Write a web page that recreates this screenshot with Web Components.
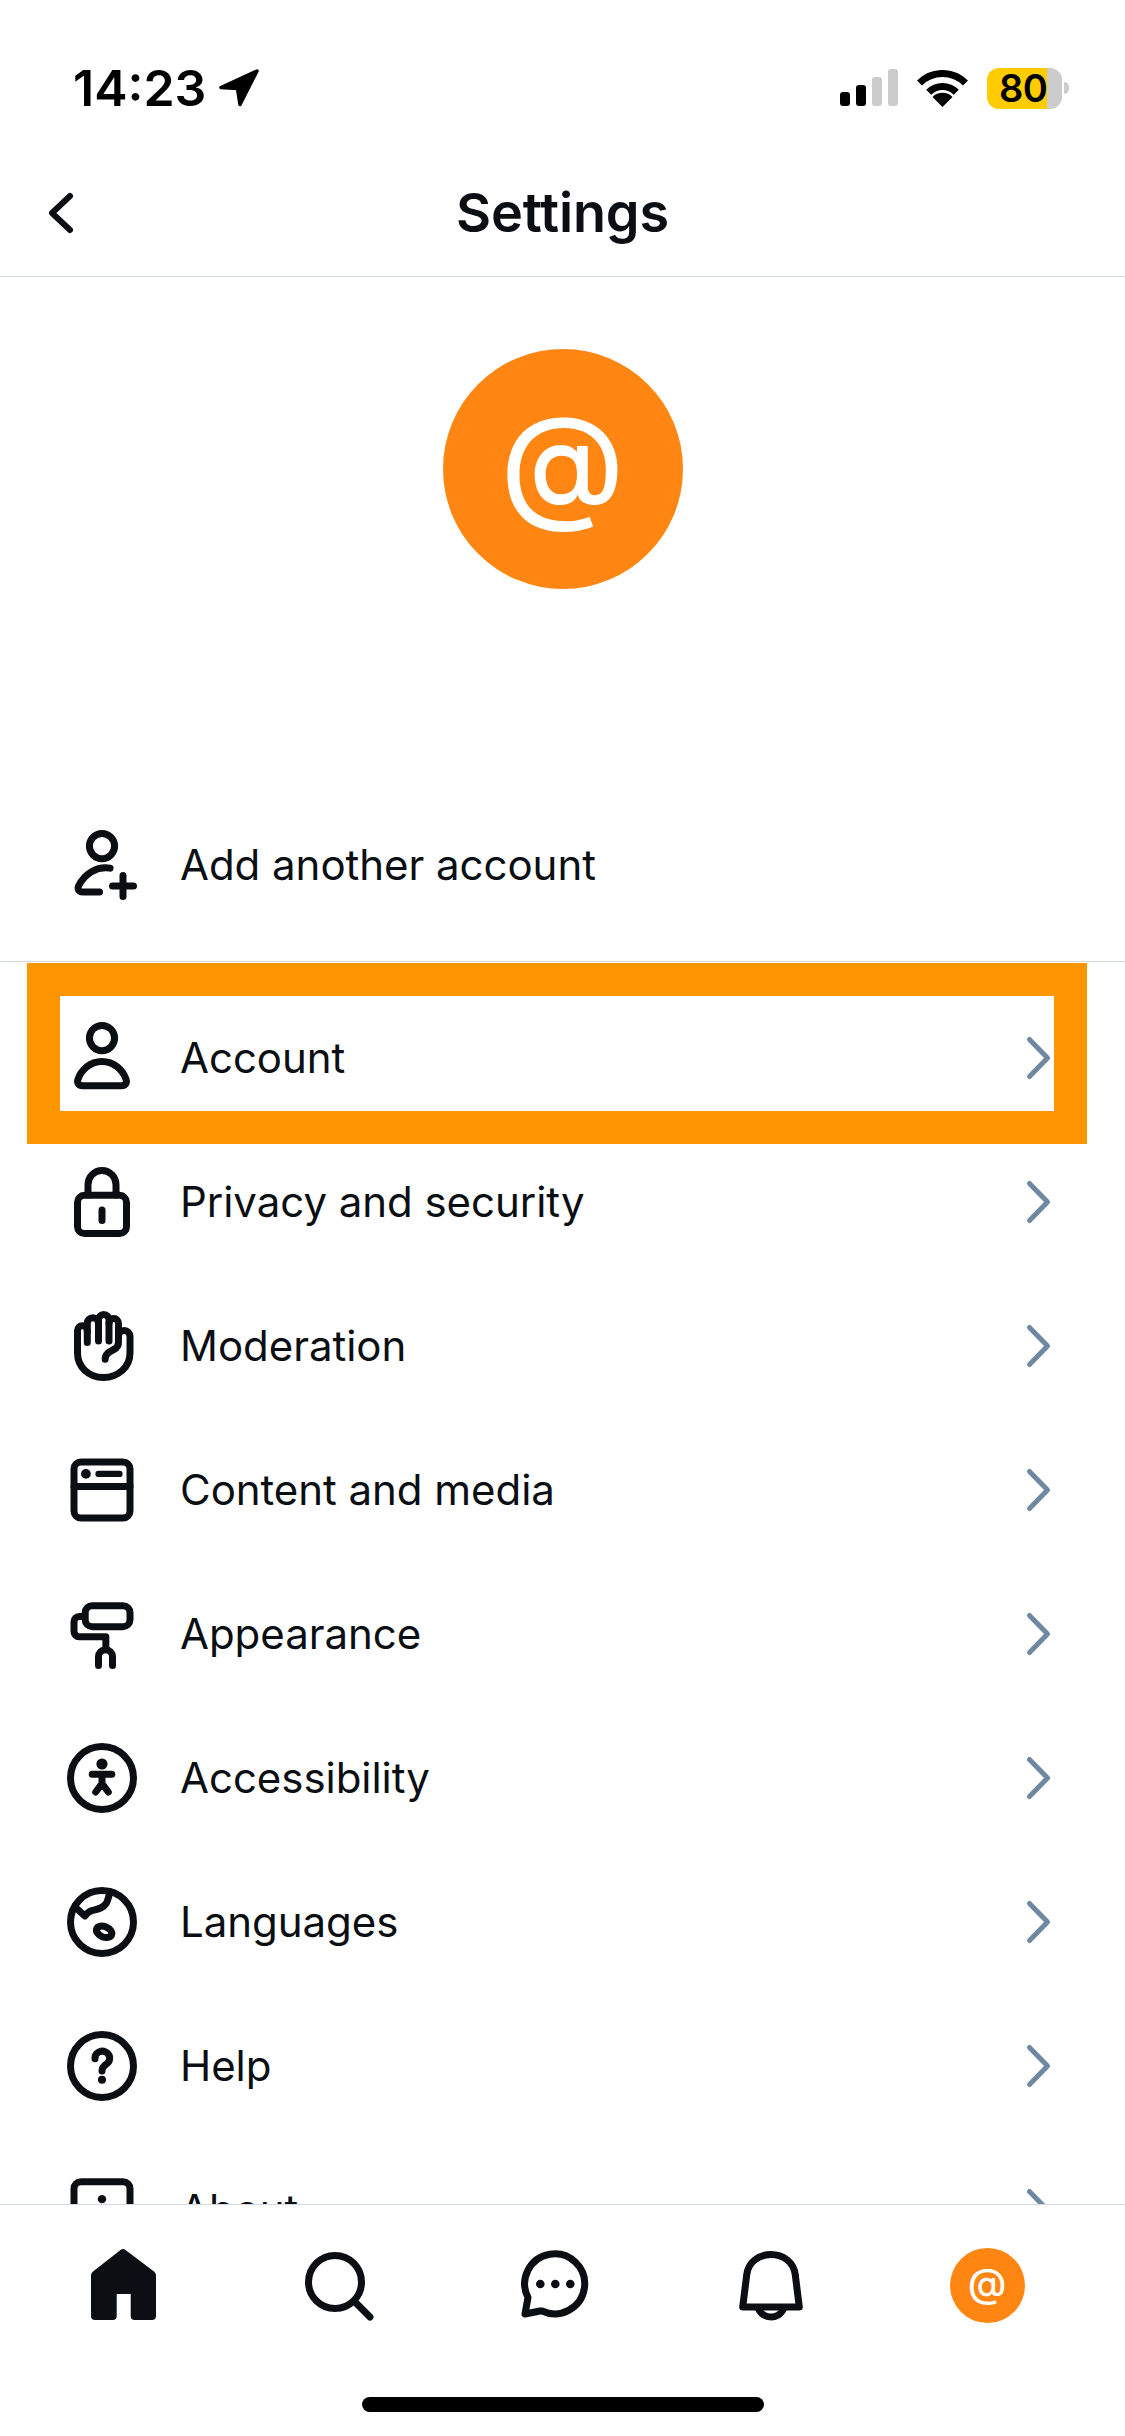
<!DOCTYPE html>
<html>
<head>
<meta charset="utf-8">
<title>Settings</title>
<style>
  html, body { margin: 0; background: #fff; }
  body { font-family: Inter, "Liberation Sans", sans-serif; color: #0b0f14; }
</style>
</head>
<body>
<app-shell>
  <status-bar slot="top"></status-bar>
  <nav-header slot="top">Settings</nav-header>
  <profile-head></profile-head>
  <settings-row icon="personAdd">Add another account</settings-row>
  <row-divider></row-divider>
  <settings-row icon="person" chevron highlight>Account</settings-row>
  <settings-row icon="lock" chevron>Privacy and security</settings-row>
  <settings-row icon="hand" chevron>Moderation</settings-row>
  <settings-row icon="window" chevron>Content and media</settings-row>
  <settings-row icon="roller" chevron>Appearance</settings-row>
  <settings-row icon="accessibility" chevron>Accessibility</settings-row>
  <settings-row icon="globe" chevron>Languages</settings-row>
  <settings-row icon="help" chevron>Help</settings-row>
  <settings-row icon="about" chevron>About</settings-row>
  <tab-bar slot="bottom"></tab-bar>
</app-shell>

<script>
// all row icons are drawn on the same 24 unit grid, 2 unit stroke
const ICONS = {
  personAdd: `<circle cx="12" cy="6.6" r="3.6"/><path d="M14.3 12.9C10.5 12.3 7 14.5 5.3 18C4.9 19 5.5 19.7 6.5 19.7H11.3"/><path d="M15 18h6M18 15v6"/>`,
  person: `<circle cx="12" cy="6.3" r="3.6"/><path d="M12 13C8.5 13 6 15.5 5.1 18.2C4.8 19.2 5.4 19.9 6.4 19.9H17.6C18.6 19.9 19.2 19.2 18.9 18.2C18 15.5 15.5 13 12 13Z"/>`,
  lock: `<rect x="5" y="10.1" width="14" height="10.9" rx="2"/><path d="M8 10V7a4 4 0 0 1 8 0V10"/><path d="M12 14.3v3"/>`,
  hand: `<path d="M7.8 11V7.6a1.4 1.4 0 0 0-2.8 0V14c0 4 3.2 7 7.4 7s7.6-3 7.6-7V9.2a1.65 1.65 0 0 0-3.3 0"/><path d="M7.8 8V5.5a1.6 1.6 0 0 1 3.2 0V10.6"/><path d="M11 5V4.5a1.5 1.5 0 0 1 3 0V10.6"/><path d="M14 5.5a1.35 1.35 0 0 1 2.7 0V11c0 1-.5 1.6-1.3 2-1.4.7-2.5 1.3-2.5 2.8"/>`,
  window: `<rect x="4" y="4" width="16" height="16" rx="2"/><path d="M4 11h16"/><path d="M11 7.4h6" stroke-width="1.8"/><circle cx="7.4" cy="7.4" r="1.4" fill="currentColor" stroke="none"/>`,
  roller: `<rect x="7.2" y="3.9" width="12.8" height="6" rx="2"/><path d="M7 7H5.5A1.5 1.5 0 0 0 4 8.5V11.3a1.5 1.5 0 0 0 1.5 1.5H13.1V16.5"/><path d="M11 21v-2.5a2 2 0 0 1 4 0V21"/>`,
  accessibility: `<circle cx="12" cy="12" r="9"/><circle cx="12" cy="8" r="1.6" fill="currentColor" stroke="none"/><path d="M9.2 10.9h5.6M12 11v2.6L10.2 16M12 13.6L13.8 16"/>`,
  globe: `<circle cx="12" cy="12" r="9"/><path d="M4.4 7.8L7.1 10.3C7.8 9.3 8.3 9 9.3 8.7C11 8.3 12.4 8 13.2 6.7C13.7 5.8 14 4.4 14.3 3.3"/><ellipse cx="12.6" cy="14.8" rx="2.3" ry="1.5" transform="rotate(22 12.6 14.8)"/>`,
  help: `<circle cx="12" cy="12" r="9"/><path d="M10 9.9A2.1 2 0 1 1 13.3 11.4C12.4 12 12 12.6 12 13.4"/><circle cx="12" cy="15.9" r="1.15" fill="currentColor" stroke="none"/>`,
  about: `<rect x="4" y="3.9" width="16" height="16" rx="2"/><circle cx="12" cy="8.9" r="1.2" fill="currentColor" stroke="none"/><path d="M12 11.5v5"/>`
};

// these are in real pixels on a 96 box, the icon sits in a tab cell
const TAB_ICONS = {
  home: `<path fill="currentColor" stroke="none" d="M45.5 13a4 4 0 0 1 5 0L79 34.5a5 5 0 0 1 2 4V79a4 4 0 0 1-4 4H59.7a4 4 0 0 1-4-4V57H41.7V79a4 4 0 0 1-4 4H20a4 4 0 0 1-4-4V38.5a5 5 0 0 1 2-4Z"/>`,
  search: `<circle cx="44" cy="45" r="26.5"/><path d="M64 65L79 80"/>`,
  chat: `<path d="M35 74A30 30 0 1 0 21 60.5L18 77L33 74Z"/><g fill="currentColor" stroke="none"><circle cx="33.3" cy="47" r="4.3"/><circle cx="48.3" cy="47" r="4.3"/><circle cx="63.3" cy="47" r="4.3"/></g>`,
  bell: `<path d="M19.7 70L23.7 38C25 25 36 17.5 48 17.5S71 25 72.3 38L76.3 70Z"/><path d="M36 73C39 78 43 80 48 80S57 78 60 73"/>`
};

function define(name, html) {
  customElements.define(name, class extends HTMLElement {
    connectedCallback() {
      if (this.shadowRoot) return;
      this.attachShadow({ mode: 'open' });
      this.shadowRoot.innerHTML = typeof html === 'function' ? html(this) : html;
    }
  });
}

define('app-shell', `
  <style>
    :host { display: flex; flex-direction: column; width: 1125px; height: 2436px; overflow: hidden; background: #fff; }
    .top { display: block; flex: none; }
    main { display: block; flex: 1; min-height: 0; overflow: hidden; }
    .bottom { display: block; flex: none; background: #fff; }
  </style>
  <div class="top"><slot name="top"></slot></div>
  <main><slot></slot></main>
  <div class="bottom"><slot name="bottom"></slot></div>
`);

define('status-bar', `
  <style>
    :host { display: flex; align-items: center; box-sizing: border-box; height: 150px; padding: 48px 56px 22px 73px; }
    .time { font: 600 50px/40px Inter, "Liberation Sans", sans-serif; color: #000; }
    .arrow { margin-left: 12px; display: block; }
    .right { margin-left: auto; display: flex; align-items: center; }
    .signal { display: flex; align-items: flex-end; gap: 6px; height: 37px; margin-bottom: 1px; }
    .signal i { display: block; width: 10px; border-radius: 3px; background: #000; }
    .signal i.off { background: #ccc; }
    .wifi { display: block; margin-left: 19px; }
    .batt { display: flex; align-items: center; margin-left: 19px; }
    .cell {
      box-sizing: border-box; width: 75px; height: 41px; border-radius: 12px; padding-left: 12px;
      background: linear-gradient(90deg, #ffcc00 60px, #ccc 60px);
      font: 600 38px/41px Inter, "Liberation Sans", sans-serif; color: #000; letter-spacing: -0.5px;
    }
    .nub { width: 5px; height: 12px; margin-left: 2px; border-radius: 0 6px 6px 0; background: #ccc; }
  </style>
  <span class="time">14:23</span>
  <svg class="arrow" width="42" height="40" viewBox="0 0 42 40"><path d="M39 3L3 19.5L19.5 20.5L22 36.5Z" fill="#000" stroke="#000" stroke-width="3.5" stroke-linejoin="round"/></svg>
  <div class="right">
    <div class="signal"><i style="height:14px"></i><i style="height:21px"></i><i class="off" style="height:29px"></i><i class="off" style="height:37px"></i></div>
    <svg class="wifi" width="51" height="37" viewBox="0 0 51 37" fill="none" stroke="#000" stroke-width="7">
      <path d="M2.5 13A32.5 32.5 0 0 1 48.5 13"/><path d="M11.7 22.2A19.5 19.5 0 0 1 39.3 22.2"/>
      <path d="M25.5 37L15.5 27A14 14 0 0 1 35.5 27Z" fill="#000" stroke="none"/>
    </svg>
    <div class="batt"><div class="cell">80</div><div class="nub"></div></div>
  </div>
`);

define('nav-header', `
  <style>
    :host { display: grid; grid-template-columns: 1fr auto 1fr; align-items: center; box-sizing: border-box; height: 127px; border-bottom: 1px solid #d4dbe2; }
    svg { display: block; margin-left: 45px; }
    .title { font: 600 54px/60px Inter, "Liberation Sans", sans-serif; letter-spacing: -0.15px; color: #0b0f14; }
  </style>
  <svg width="32" height="48" viewBox="0 0 32 48" fill="none" stroke="#0b0f14" stroke-width="6" stroke-linecap="round" stroke-linejoin="round"><path d="M25 7L7 24L25 41"/></svg>
  <div class="title"><slot></slot></div>
  <span></span>
`);

define('bsky-avatar', host => {
  const size = +host.getAttribute('size');
  return `
  <style>
    :host { display: flex; align-items: center; justify-content: center; width: ${size}px; height: ${size}px; border-radius: 50%; background: #ff8612; }
    span { font: 500 ${size * 0.525}px/1 Inter, "Liberation Sans", sans-serif; color: #fff; margin-bottom: ${size * 0.07}px; }
  </style>
  <span>@</span>`;
});

define('profile-head', `
  <style>
    :host { display: flex; justify-content: center; padding: 72px 0 204px; }
  </style>
  <bsky-avatar size="240"></bsky-avatar>
`);

define('settings-row', host => `
  <style>
    :host { display: flex; align-items: center; position: relative; box-sizing: border-box; height: 144px; padding: 0 65px 0 60px; gap: 36px; font: 400 42px/60px Inter, "Liberation Sans", sans-serif; letter-spacing: -0.04px; color: #0b0f14; }
    .icon { display: block; flex: none; color: #0b0f14; }
    .label { flex: 1; }
    .chev { display: block; flex: none; }
    .mark { position: absolute; left: 27px; top: -23px; width: 1060px; height: 181px; box-sizing: border-box; border: 33px solid #ff9500; }
  </style>
  <svg class="icon" width="84" height="84" viewBox="0 0 24 24" fill="none" stroke="currentColor" stroke-width="2" stroke-linecap="round" stroke-linejoin="round">${ICONS[host.getAttribute('icon')]}</svg>
  <span class="label"><slot></slot></span>
  ${host.hasAttribute('chevron') ? `<svg class="chev" width="40" height="60" viewBox="0 0 40 60" fill="none" stroke="#6f87a0" stroke-width="5" stroke-linecap="round" stroke-linejoin="round"><path d="M9.5 11.5L27.5 30L9.5 48.5"/></svg>` : ''}
  ${host.hasAttribute('highlight') ? `<div class="mark"></div>` : ''}
`);

define('row-divider', `
  <style>
    :host { display: block; height: 1px; margin: 24px 0 24px; background: #d4dbe2; }
  </style>
`);

define('tab-bar', () => `
  <style>
    :host { display: block; border-top: 1px solid #d4dbe2; background: #fff; box-sizing: border-box; height: 232px; padding-top: 32px; }
    .tabs { display: grid; grid-template-columns: repeat(5, 216px); padding: 0 15px; }
    .tab { display: flex; justify-content: center; align-items: center; height: 96px; color: #0b0f14; }
    svg { display: block; }
    .home { width: 402px; height: 15px; margin: 64px auto 0; border-radius: 8px; background: #000; }
  </style>
  <div class="tabs">
    ${['home', 'search', 'chat', 'bell'].map(n => `<div class="tab"><svg width="96" height="96" viewBox="0 0 96 96" fill="none" stroke="currentColor" stroke-width="7" stroke-linecap="round" stroke-linejoin="round">${TAB_ICONS[n]}</svg></div>`).join('')}
    <div class="tab"><bsky-avatar size="75"></bsky-avatar></div>
  </div>
  <div class="home"></div>
`);
</script>
</body>
</html>
